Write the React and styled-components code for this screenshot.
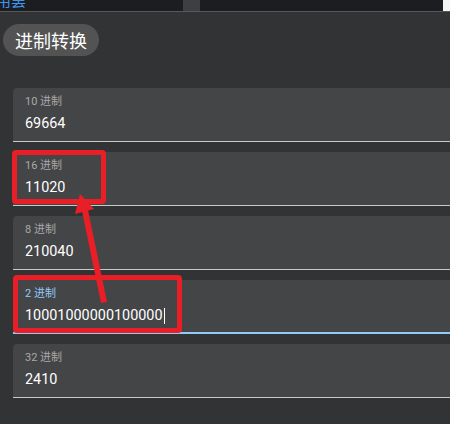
import React from "react";
import styled, { createGlobalStyle } from "styled-components";

const GlobalStyle = createGlobalStyle`
  html, body {
    margin: 0;
    padding: 0;
    background: #323335;
    overflow: hidden;
    font-family: Roboto, "Noto Sans CJK SC", sans-serif;
  }
`;

const Page = styled.div`
  position: relative;
  width: 450px;
  height: 424px;
  overflow: hidden;
`;

// Browser-ish strip at the very top (cut off in the screenshot)
const TopStrip = styled.div`
  display: flex;
  height: 11px;
  background: #1c1d20;
  border-bottom: 1px solid #56585b;
  overflow: hidden;
`;

const Crumb = styled.div`
  width: 183px;
  overflow: hidden;
  color: #3f95ee;
  font-size: 15px;
  line-height: 16px;
  margin-top: -7px;
  text-indent: -4px;
`;

const Thumb = styled.div`
  width: 17px;
  background: #3c4043;
`;

const Filler = styled.div`
  flex: 1;
`;

const Edge = styled.div`
  width: 7px;
  background: #f4f4f4;
`;

const Main = styled.div`
  padding: 12px 0 0 3px;
`;

const TitlePill = styled.div`
  display: inline-flex;
  align-items: center;
  height: 32px;
  padding: 0 12px;
  border-radius: 16px;
  background: #535353;
  color: #ffffff;
  font-size: 18px;
`;

const FieldList = styled.div`
  display: flex;
  flex-direction: column;
  gap: 10px;
  margin-top: 32px;
  padding-left: 10px;
  width: 470px;
`;

const Field = styled.div`
  box-sizing: border-box;
  height: 54px;
  padding: 7px 12px 0;
  background: #444547;
  border-radius: 4px 4px 0 0;
  border-bottom: ${({ focused }) => (focused ? "2px solid #90caf9" : "1px solid #c8c8c8")};
`;

const Label = styled.div`
  font-size: 11px;
  line-height: 14px;
  color: ${({ focused }) => (focused ? "#90caf9" : "#a9a9a9")};
`;

const Value = styled.div`
  display: flex;
  align-items: center;
  margin-top: 5px;
  font-size: 14.4px;
  line-height: 20px;
  color: #ffffff;
`;

const Caret = styled.span`
  width: 1px;
  height: 16px;
  margin-left: 1px;
  background: #ffffff;
`;

const Mark = styled.div`
  position: absolute;
  box-sizing: border-box;
  border: 5px solid #e91e26;
  border-radius: 4px;
`;

const Overlay = styled.svg`
  position: absolute;
  left: 0;
  top: 0;
  pointer-events: none;
`;

const fields = [
  { label: "10 进制", value: "69664" },
  { label: "16 进制", value: "11020" },
  { label: "8 进制", value: "210040" },
  { label: "2 进制", value: "10001000000100000", focused: true },
  { label: "32 进制", value: "2410" },
];

export default function App() {
  return (
    <Page>
      <GlobalStyle />
      <TopStrip>
        <Crumb>用罢</Crumb>
        <Thumb />
        <Filler />
        <Edge />
      </TopStrip>
      <Main>
        <TitlePill>进制转换</TitlePill>
        <FieldList>
          {fields.map((f) => (
            <Field key={f.label} focused={f.focused}>
              <Label focused={f.focused}>{f.label}</Label>
              <Value>
                {f.value}
                {f.focused && <Caret />}
              </Value>
            </Field>
          ))}
        </FieldList>
      </Main>

      {/* red annotations */}
      <Mark style={{ left: 12, top: 150, width: 94, height: 54 }} />
      <Mark style={{ left: 13, top: 275, width: 169, height: 58 }} />
      <Overlay width="450" height="424">
        <polygon points="82,211 88,210 107,302 101,303" fill="#e91e26" />
        <polygon points="80,194 75,214 94,209" fill="#e91e26" />
      </Overlay>
    </Page>
  );
}
